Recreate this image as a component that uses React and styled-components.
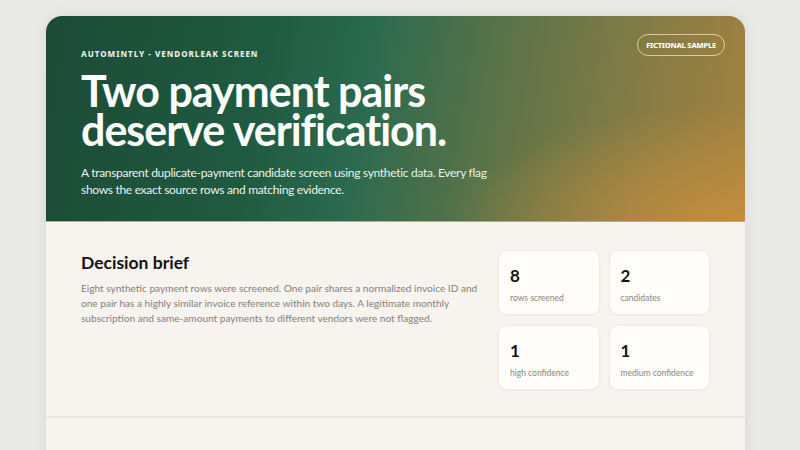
import React from 'react';
import styled, { createGlobalStyle } from 'styled-components';

const GlobalStyle = createGlobalStyle`
    * { box-sizing: border-box; }
    body {
        margin: 0;
        background: #e9e9e8;
        font-family: Lato, "Noto Sans", sans-serif;
        color: #141414;
    }
`

const Page = styled.div`
    padding: 16px 40px 40px 46px;
`

const Sheet = styled.main`
    width: 699px;
    background: #f7f3ee;
    border-radius: 16px;
    overflow: hidden;
    box-shadow: 0 0 14px rgba(0, 0, 0, 0.08);
`

const Hero = styled.header`
    position: relative;
    height: 206px;
    padding: 32px 35px 0;
    color: #ffffff;
    border-bottom: 1px solid #d8a25a;
    background:
        radial-gradient(ellipse 60% 80% at 100% 100%, rgba(196, 142, 62, 0.95) 0%, rgba(196, 142, 62, 0) 70%),
        linear-gradient(100deg, #1c4a36 0%, #1f5a40 30%, #2b6a4e 45%, #5f7448 65%, #8a7d45 85%, #a4823f 100%);
`

const Eyebrow = styled.div`
    font-family: "Noto Sans", sans-serif;
    font-size: 8px;
    font-weight: 800;
    letter-spacing: 1px;
    text-transform: uppercase;
    color: #e4ece6;
`

const Pill = styled.span`
    position: absolute;
    top: 18px;
    right: 20px;
    padding: 5px 8px;
    border: 1px solid rgba(255, 236, 190, 0.7);
    border-radius: 999px;
    font-family: "Noto Sans", sans-serif;
    font-size: 7.5px;
    line-height: 10px;
    font-weight: 800;
    letter-spacing: -0.2px;
    text-transform: uppercase;
`

const Headline = styled.h1`
    margin: 12px 0 0;
    font-size: 43px;
    line-height: 39px;
    font-weight: 700;
    letter-spacing: -1px;
    max-width: 420px;
`

const Lede = styled.p`
    margin: 15px 0 0;
    max-width: 420px;
    font-size: 12px;
    line-height: 17px;
    letter-spacing: -0.3px;
    color: #eaf1ec;
`

const Brief = styled.section`
    display: grid;
    grid-template-columns: 1fr 212px;
    gap: 20px;
    padding: 28px 35px 26px;
    border-bottom: 2px solid #ebe7e2;
`

const BriefTitle = styled.h2`
    margin: 2px 0 0;
    font-size: 17.5px;
    font-weight: 700;
`

const BriefText = styled.p`
    margin: 8px 0 0;
    font-size: 10.1px;
    line-height: 15px;
    color: #85817c;
`

const StatGrid = styled.div`
    display: grid;
    grid-template-columns: 1fr 1fr;
    gap: 10px 9px;
`

const Stat = styled.div`
    height: 65px;
    padding: 14px 11px 0;
    background: #fffdfa;
    border: 1px solid #efeae4;
    border-radius: 9px;
    box-shadow: 0 1px 3px rgba(0, 0, 0, 0.03);
`

const StatValue = styled.div`
    font-size: 17px;
    line-height: 22px;
    font-weight: 700;
`

const StatLabel = styled.div`
    margin-top: 6px;
    font-size: 8.5px;
    color: #8a8580;
`

const Rest = styled.section`
    height: 760px;
`

const stats = [
    { value: '8', label: 'rows screened' },
    { value: '2', label: 'candidates' },
    { value: '1', label: 'high confidence' },
    { value: '1', label: 'medium confidence' },
]

export default function App() {
    return (
        <>
            <GlobalStyle />
            <Page>
                <Sheet>
                    <Hero>
                        <Eyebrow>Automintly - VendorLeak Screen</Eyebrow>
                        <Pill>Fictional sample</Pill>
                        <Headline>Two payment pairs deserve verification.</Headline>
                        <Lede>A transparent duplicate-payment candidate screen using synthetic data. Every flag shows the exact source rows and matching evidence.</Lede>
                    </Hero>
                    <Brief>
                        <div>
                            <BriefTitle>Decision brief</BriefTitle>
                            <BriefText>
                                Eight synthetic payment rows were screened. One pair shares a normalized invoice ID and one pair has a highly similar invoice reference within two days. A legitimate monthly subscription and same-amount payments to different vendors were not flagged.
                            </BriefText>
                        </div>
                        <StatGrid>
                            {stats.map((s) => (
                                <Stat key={s.label}>
                                    <StatValue>{s.value}</StatValue>
                                    <StatLabel>{s.label}</StatLabel>
                                </Stat>
                            ))}
                        </StatGrid>
                    </Brief>
                    <Rest />
                </Sheet>
            </Page>
        </>
    );
}
